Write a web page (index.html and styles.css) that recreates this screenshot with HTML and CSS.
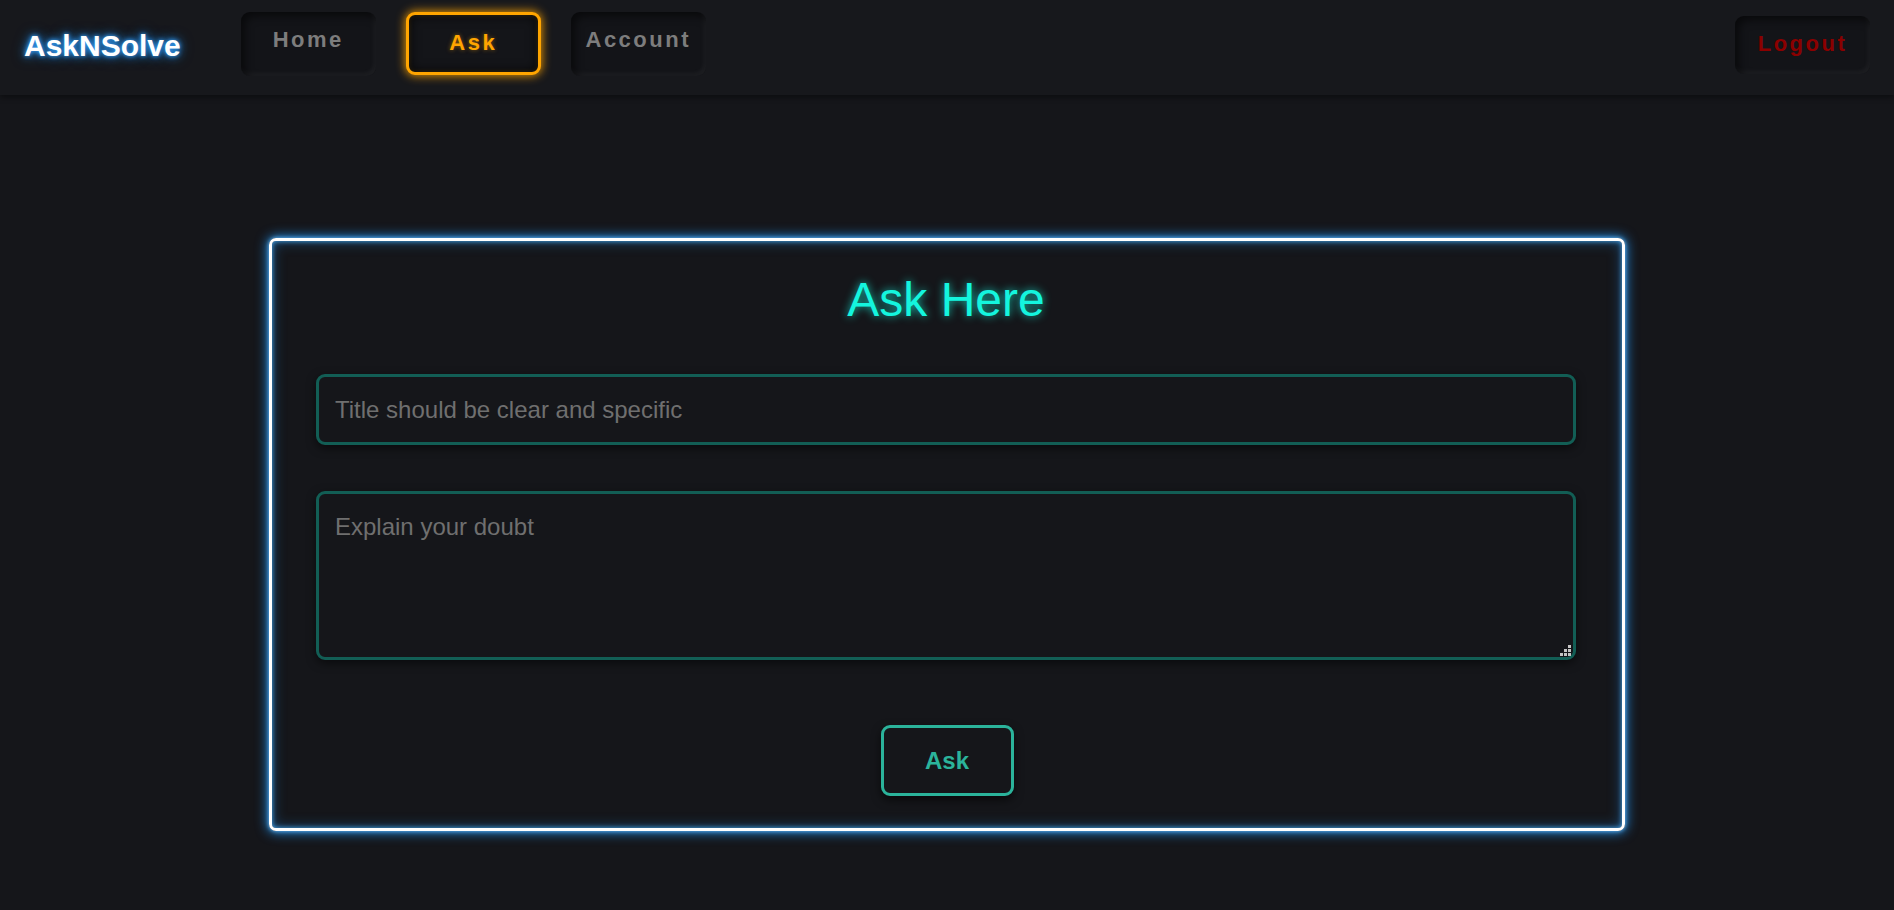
FILE: index.html
```html
<!DOCTYPE html>
<html lang="en">
<head>
<meta charset="utf-8">
<title>AskNSolve - Ask</title>
<link rel="stylesheet" href="styles.css">
</head>
<body>
<nav class="navbar">
  <div class="brand">AskNSolve</div>
  <div class="nav-links">
    <a class="nav-btn" href="#">Home</a>
    <a class="nav-btn active" href="#">Ask</a>
    <a class="nav-btn" href="#">Account</a>
  </div>
  <a class="nav-btn logout" href="#">Logout</a>
</nav>
<main class="main">
  <form class="ask-card">
    <h1 class="ask-title">Ask Here</h1>
    <input class="field title-field" type="text" placeholder="Title should be clear and specific">
    <textarea class="field body-field" placeholder="Explain your doubt"></textarea>
    <button class="ask-submit" type="button">Ask</button>
  </form>
</main>
</body>
</html>
```

FILE: styles.css
```css
* { box-sizing: border-box; }
html, body { margin: 0; padding: 0; }
body {
  background: #15161a;
  font-family: "Liberation Sans", Arial, sans-serif;
  min-height: 910px;
}
.navbar {
  height: 95px;
  display: flex;
  align-items: center;
  padding: 0 24px 7px 24px;
  background: #17181c;
  box-shadow: 0 2px 6px rgba(0, 0, 0, 0.45);
}
.brand {
  color: #ffffff;
  font-weight: bold;
  font-size: 30px;
  margin-top: 4px;
  text-shadow: 0 0 4px #3aa4ff, 0 0 9px #1e86e0, 0 0 14px rgba(30, 134, 224, 0.6);
}
.nav-links {
  display: flex;
  gap: 30px;
  margin-left: 60px;
  flex: 1;
}
.nav-btn {
  width: 135px;
  height: 64px;
  display: flex;
  align-items: center;
  justify-content: center;
  padding-bottom: 8px;
  border-radius: 9px;
  text-decoration: none;
  font-weight: bold;
  font-size: 22px;
  letter-spacing: 2.5px;
  color: #7d7d7d;
  background: #131418;
  box-shadow: inset 4px 4px 9px rgba(0, 0, 0, 0.55), inset -2px -3px 5px rgba(255, 255, 255, 0.05);
}
.nav-btn.active {
  height: 63px;
  padding-bottom: 2px;
  color: #ffa500;
  border: 3px solid #ffa500;
  background: #141519;
  box-shadow: 0 0 10px 1px rgba(255, 165, 0, 0.85), inset 0 0 12px rgba(0, 0, 0, 0.9), inset 0 0 4px rgba(255, 165, 0, 0.35);
  text-shadow: 0 0 4px rgba(255, 165, 0, 0.5);
}
.nav-btn.logout {
  height: 58px;
  padding-bottom: 2px;
  color: #8b0000;
  margin-top: 2px;
}
.main {
  padding-top: 143px;
  display: flex;
  justify-content: center;
}
.ask-card {
  width: 1356px;
  height: 593px;
  border: 3px solid #ffffff;
  border-radius: 7px;
  padding: 0 46px 31px 44px;
  display: flex;
  flex-direction: column;
  align-items: stretch;
  box-shadow: 0 0 4px #6cc0ff, 0 0 12px 2px #1f7fd0, inset 0 0 5px #4aa8f0, inset 0 0 14px rgba(31, 127, 208, 0.55);
}
.ask-title {
  margin: 31px 0 0;
  text-align: center;
  font-weight: normal;
  font-size: 48px;
  line-height: 55px;
  color: #14f5de;
  text-shadow: 0 0 8px rgba(20, 245, 222, 0.8);
}
.field {
  display: block;
  width: 100%;
  background: #15161a;
  border: 3px solid #125e55;
  border-radius: 9px;
  font-family: "Liberation Sans", Arial, sans-serif;
  font-size: 24px;
  color: #cfcfcf;
  padding: 0 16px;
  outline: none;
  box-shadow: 0 3px 10px rgba(0, 0, 0, 0.55);
}
.field::placeholder { color: #6f6f6f; }
.title-field {
  margin-top: 47px;
  height: 71px;
}
.body-field {
  margin-top: 46px;
  height: 169px;
  padding-top: 19px;
  resize: vertical;
}
.body-field::-webkit-resizer {
  background-color: transparent;
  background-repeat: no-repeat;
  background-image:
    linear-gradient(#c4c4c4, #c4c4c4),
    linear-gradient(#c4c4c4, #c4c4c4),
    linear-gradient(#c4c4c4, #c4c4c4),
    linear-gradient(#c4c4c4, #c4c4c4),
    linear-gradient(#c4c4c4, #c4c4c4),
    linear-gradient(#c4c4c4, #c4c4c4);
  background-size: 3px 3px;
  background-position:
    right 2px bottom 1px,
    right 6px bottom 1px,
    right 10px bottom 1px,
    right 2px bottom 5px,
    right 6px bottom 5px,
    right 2px bottom 9px;
}
.ask-submit {
  align-self: center;
  margin-top: 65px;
  margin-left: 2px;
  width: 133px;
  height: 71px;
  background: #15161a;
  border: 3px solid #2bb39b;
  border-radius: 9px;
  color: #2bb39b;
  font-family: "Liberation Sans", Arial, sans-serif;
  font-weight: bold;
  font-size: 24px;
  box-shadow: 0 4px 10px rgba(0, 0, 0, 0.6);
  cursor: pointer;
}
```
